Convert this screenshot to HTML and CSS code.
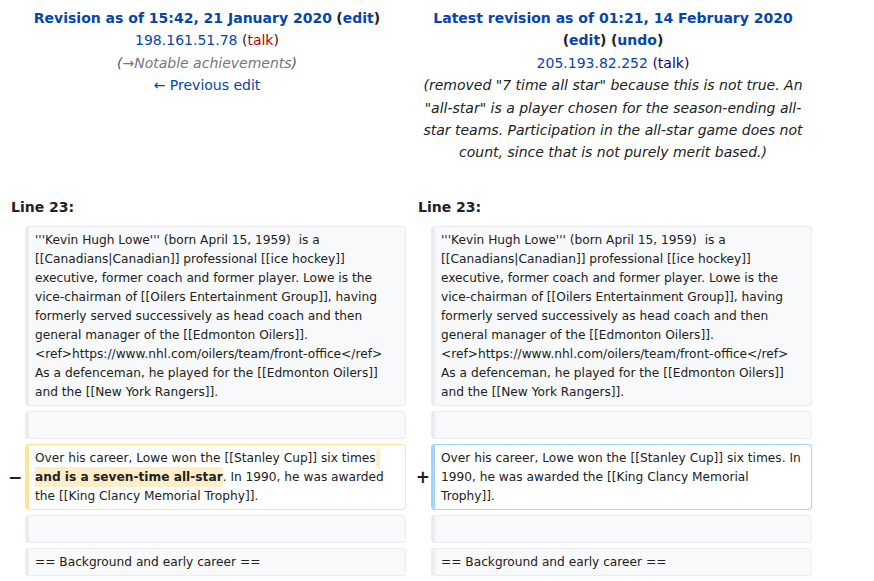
FILE: index.html
```html
<!DOCTYPE html>
<html lang="en">
<head>
<meta charset="utf-8">
<title>Kevin Lowe: Difference between revisions</title>
<link rel="stylesheet" href="styles.css">
</head>
<body>
<div class="diff">
  <div class="title title-old">
    <div><strong><a class="link" href="#">Revision as of 15:42, 21 January 2020</a></strong> <strong class="paren">(<a class="link" href="#">edit</a>)</strong></div>
    <div><a class="link light" href="#">198.161.51.78</a> (<a class="redlink" href="#">talk</a>)</div>
    <div class="summary">(<span class="autocomment">→Notable achievements</span>)</div>
    <div><a class="link light" href="#">← Previous edit</a></div>
  </div>
  <div class="title title-new">
    <div><strong><a class="link" href="#">Latest revision as of 01:21, 14 February 2020</a></strong> <strong class="paren">(<a class="link" href="#">edit</a>)</strong> <strong class="paren">(<a class="link" href="#">undo</a>)</strong></div>
    <div><a class="link light" href="#">205.193.82.252</a> <a class="visited" href="#">(talk)</a></div>
    <div class="summary comment">(removed "7 time all star" because this is not true. An "all-star" is a player chosen for the season-ending all-star teams. Participation in the all-star game does not count, since that is not purely merit based.)</div>
  </div>

  <div class="lineno lineno-old">Line 23:</div>
  <div class="lineno lineno-new">Line 23:</div>

  <div class="marker marker-old"></div>
  <div class="cell cell-old context">'''Kevin Hugh Lowe''' (born April 15, 1959)  is a [[Canadians|Canadian]] professional [[ice hockey]] executive, former coach and former player. Lowe is the vice-chairman of [[Oilers Entertainment Group]], having formerly served successively as head coach and then general manager of the [[Edmonton Oilers]]. &lt;ref&gt;https://www.nhl.com/oilers/team/front-office&lt;/ref&gt; As a defenceman, he played for the [[Edmonton Oilers]] and the [[New York Rangers]].</div>
  <div class="marker marker-new"></div>
  <div class="cell cell-new context">'''Kevin Hugh Lowe''' (born April 15, 1959)  is a [[Canadians|Canadian]] professional [[ice hockey]] executive, former coach and former player. Lowe is the vice-chairman of [[Oilers Entertainment Group]], having formerly served successively as head coach and then general manager of the [[Edmonton Oilers]]. &lt;ref&gt;https://www.nhl.com/oilers/team/front-office&lt;/ref&gt; As a defenceman, he played for the [[Edmonton Oilers]] and the [[New York Rangers]].</div>

  <div class="marker marker-old"></div>
  <div class="cell cell-old context"><br></div>
  <div class="marker marker-new"></div>
  <div class="cell cell-new context"><br></div>

  <div class="marker marker-old">−</div>
  <div class="cell cell-old deleted">Over his career, Lowe won the [[Stanley Cup]] six times<del class="change"> and is a seven-time all-star</del>. In 1990, he was awarded the [[King Clancy Memorial Trophy]].</div>
  <div class="marker marker-new">+</div>
  <div class="cell cell-new added">Over his career, Lowe won the [[Stanley Cup]] six times. In 1990, he was awarded the [[King Clancy Memorial Trophy]].</div>

  <div class="marker marker-old"></div>
  <div class="cell cell-old context"><br></div>
  <div class="marker marker-new"></div>
  <div class="cell cell-new context"><br></div>

  <div class="marker marker-old"></div>
  <div class="cell cell-old context">== Background and early career ==</div>
  <div class="marker marker-new"></div>
  <div class="cell cell-new context">== Background and early career ==</div>
</div>
</body>
</html>
```
FILE: styles.css
```css
html, body {
  margin: 0;
  padding: 0;
  background: #ffffff;
}

body {
  font-family: "DejaVu Sans", sans-serif;
  color: #202122;
  font-size: 14px;
}

.diff {
  display: grid;
  grid-template-columns: 17px 381px 8px 17px 381px;
  row-gap: 5px;
  padding: 7px 8px 0 8px;
}

.title {
  text-align: center;
  line-height: 1.6;
  font-size: 14px;
}

.title-old { grid-column: 1 / 3; }
.title-new { grid-column: 4 / 6; }

.link {
  color: #0645ad;
  text-decoration: none;
}

.redlink {
  color: #ba0000;
  text-decoration: none;
}

.visited {
  color: #0b0080;
  text-decoration: none;
}

.paren {
  color: #202122;
}

.summary {
  font-style: italic;
  color: #54595d;
}

.summary .autocomment {
  color: #72777d;
}

.comment {
  color: #202122;
}

.lineno {
  font-weight: bold;
  line-height: 1.6;
  padding-left: 3px;
  margin-top: 27px;
  margin-bottom: 3px;
}

.lineno-old { grid-column: 1 / 3; }
.lineno-new { grid-column: 4 / 6; padding-left: 4px; }

.marker {
  align-self: center;
  text-align: right;
  font-weight: bold;
  font-size: 17px;
  line-height: 1.2;
  padding-right: 3px;
}

.marker-old { grid-column: 1; }
.marker-new { grid-column: 4; padding-right: 1px; }

.cell-old { grid-column: 2; }
.cell-new { grid-column: 5; }

.cell {
  font-size: 12.2px;
  line-height: 19px;
  white-space: pre-wrap;
  overflow-wrap: break-word;
  padding: 3.5px 6px 3.5px 6px;
  border-style: solid;
  border-width: 1px 1px 1px 4px;
  border-radius: 4px;
}

.context {
  background: #f8f9fa;
  border-color: #eaecf0;
  color: #202122;
}

.deleted {
  background: #ffffff;
  border-color: #ffe49c;
}

.added {
  background: #ffffff;
  border-color: #a3d3ff;
}

.change {
  text-decoration: none;
  font-weight: bold;
  background: #feeec8;
  border-radius: 4px;
  padding: 3px 0;
}
```
